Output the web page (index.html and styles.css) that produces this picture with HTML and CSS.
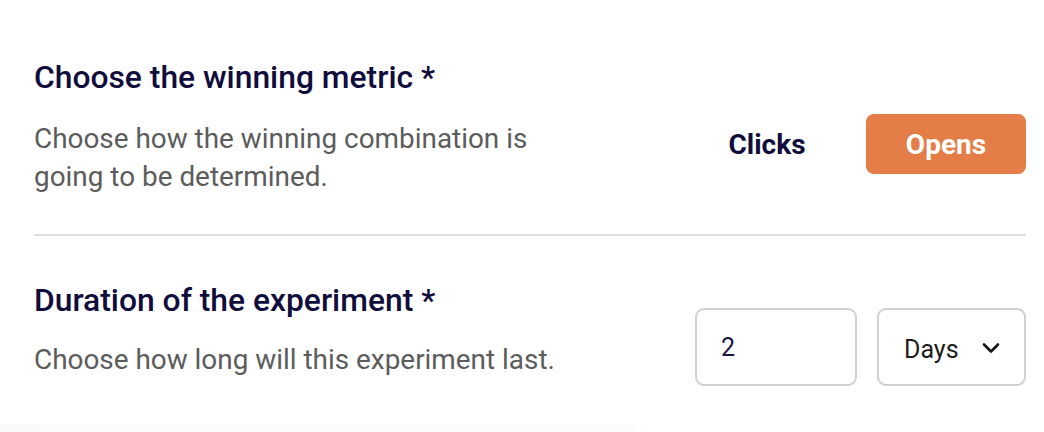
FILE: index.html
```html
<!DOCTYPE html>
<html lang="en">
<head>
<meta charset="utf-8">
<title>Experiment settings</title>
<link rel="stylesheet" href="styles.css">
</head>
<body>
<main class="panel">
  <section class="setting setting-metric">
    <div class="setting-text">
      <h2 class="setting-title">Choose the winning metric *</h2>
      <p class="setting-desc">Choose how the winning combination is<br>going to be determined.</p>
    </div>
    <div class="setting-controls metric-controls">
      <button class="toggle">Clicks</button>
      <button class="toggle toggle-active">Opens</button>
    </div>
  </section>
  <hr class="divider">
  <section class="setting setting-duration">
    <div class="setting-text">
      <h2 class="setting-title">Duration of the experiment *</h2>
      <p class="setting-desc">Choose how long will this experiment last.</p>
    </div>
    <div class="setting-controls duration-controls">
      <div class="field field-number">2</div>
      <div class="field field-select">
        <span>Days</span>
        <svg class="chevron" width="18" height="12" viewBox="0 0 18 12"><path d="M2 2.5 L9 9.5 L16 2.5" fill="none" stroke="#111" stroke-width="2.6" stroke-linecap="round" stroke-linejoin="round"/></svg>
      </div>
    </div>
  </section>
  <div class="footer-shade"></div>
</main>
</body>
</html>
```
FILE: styles.css
```css
* { box-sizing: border-box; }
html, body {
  margin: 0;
  padding: 0;
  background: #ffffff;
}
body {
  font-family: Roboto, "Liberation Sans", sans-serif;
  width: 1044px;
  height: 432px;
  overflow: hidden;
}
.panel {
  padding: 59px 18px 0 34px;
  display: flex;
  flex-direction: column;
  height: 432px;
}
.setting {
  display: flex;
  justify-content: space-between;
  align-items: flex-start;
}
.setting-text {
  display: flex;
  flex-direction: column;
}
.setting-title {
  margin: 0;
  font-size: 31.8px;
  line-height: 36px;
  font-weight: 500;
  color: #100d3d;
}
.setting-desc {
  margin: 25px 0 0;
  font-size: 27.9px;
  line-height: 38px;
  font-weight: 400;
  color: #5c5c5c;
}
.setting-metric {
  padding-bottom: 38px;
}
.metric-controls {
  display: flex;
  gap: 19px;
  margin-top: 55px;
}
.toggle {
  width: 160px;
  height: 60px;
  border: none;
  border-radius: 8px;
  background: transparent;
  font-family: Roboto, "Liberation Sans", sans-serif;
  font-size: 28px;
  font-weight: 700;
  color: #100d3d;
  padding: 0;
}
.toggle-active {
  background: #e57d48;
  color: #ffffff;
}
.divider {
  margin: 0;
  border: none;
  height: 2px;
  background: #dedede;
}
.setting-duration {
  padding-top: 46px;
}
.setting-duration .setting-desc {
  margin-top: 23px;
}
.duration-controls {
  display: flex;
  gap: 20px;
  margin-top: 26px;
}
.field {
  height: 78px;
  border: 2px solid #d0d0d0;
  border-radius: 9px;
  display: flex;
  align-items: center;
  font-size: 25px;
}
.field-number {
  width: 162px;
  padding-left: 24px;
  color: #1a1746;
}
.field-select {
  width: 149px;
  padding: 4px 24px 0 25px;
  justify-content: space-between;
  color: #1d1d1d;
}
.chevron {
  margin-top: -2px;
}
.footer-shade {
  margin: auto -18px 0 -34px;
  height: 8px;
  background: linear-gradient(to right, #fafafa 0%, #fbfbfb 60%, #ffffff 62%);
}
```
